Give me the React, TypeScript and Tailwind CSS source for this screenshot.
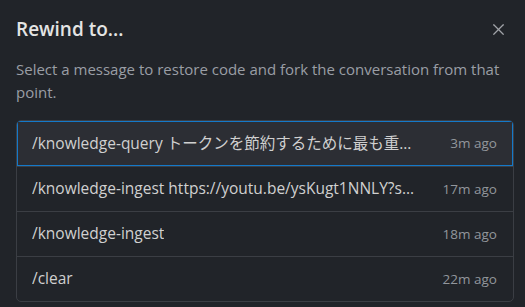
import React from 'react';
import { X } from 'lucide-react';

const checkpoints = [
  { label: '/knowledge-query トークンを節約するために最も重要なポイントをまとめてください', time: '3m ago' },
  { label: '/knowledge-ingest https://youtu.be/ysKugt1NNLY?si=Qx8dLm2', time: '17m ago' },
  { label: '/knowledge-ingest', time: '18m ago' },
  { label: '/clear', time: '22m ago' },
];

const App: React.FC = () => {
  return (
    <div
      className="w-[525px] h-[307px] overflow-hidden bg-[#212429] pl-4 pr-[11px] pt-[16px]"
      style={{ fontFamily: '"Open Sans", "Noto Sans CJK JP", sans-serif' }}
    >
      <div className="flex h-[26px] items-center justify-between">
        <h1 className="text-[19px] font-semibold text-[#e4e4e4] leading-[26px]">Rewind to...</h1>
        <button className="mr-[6px] text-[#a0a3a8]" aria-label="Close">
          <X className="w-[19px] h-[19px]" strokeWidth={1.5} />
        </button>
      </div>

      <p className="mt-[16px] pr-[4px] text-[15px] leading-[23px] text-[#9a9ea5]">
        Select a message to restore code and fork the conversation from that point.
      </p>

      <div className="mt-[16px] rounded-[5px] border border-[#3b3e44] overflow-hidden">
        {checkpoints.map((c, i) => (
          <div
            key={c.time}
            className={
              i === 0
                ? 'flex h-[45px] items-center justify-between gap-7 bg-[#2c2e34] pl-[15px] pr-[16px] shadow-[inset_0_0_0_1px_#1479c9]'
                : 'flex h-[45px] items-center justify-between gap-7 border-t border-[#3b3e44] pl-[15px] pr-[16px]'
            }
          >
            <span className="truncate text-[15.5px] text-[#d0d0d0]">{c.label}</span>
            <span className="shrink-0 text-[13.5px] text-[#92969c]">{c.time}</span>
          </div>
        ))}
      </div>
    </div>
  );
};

export default App;
